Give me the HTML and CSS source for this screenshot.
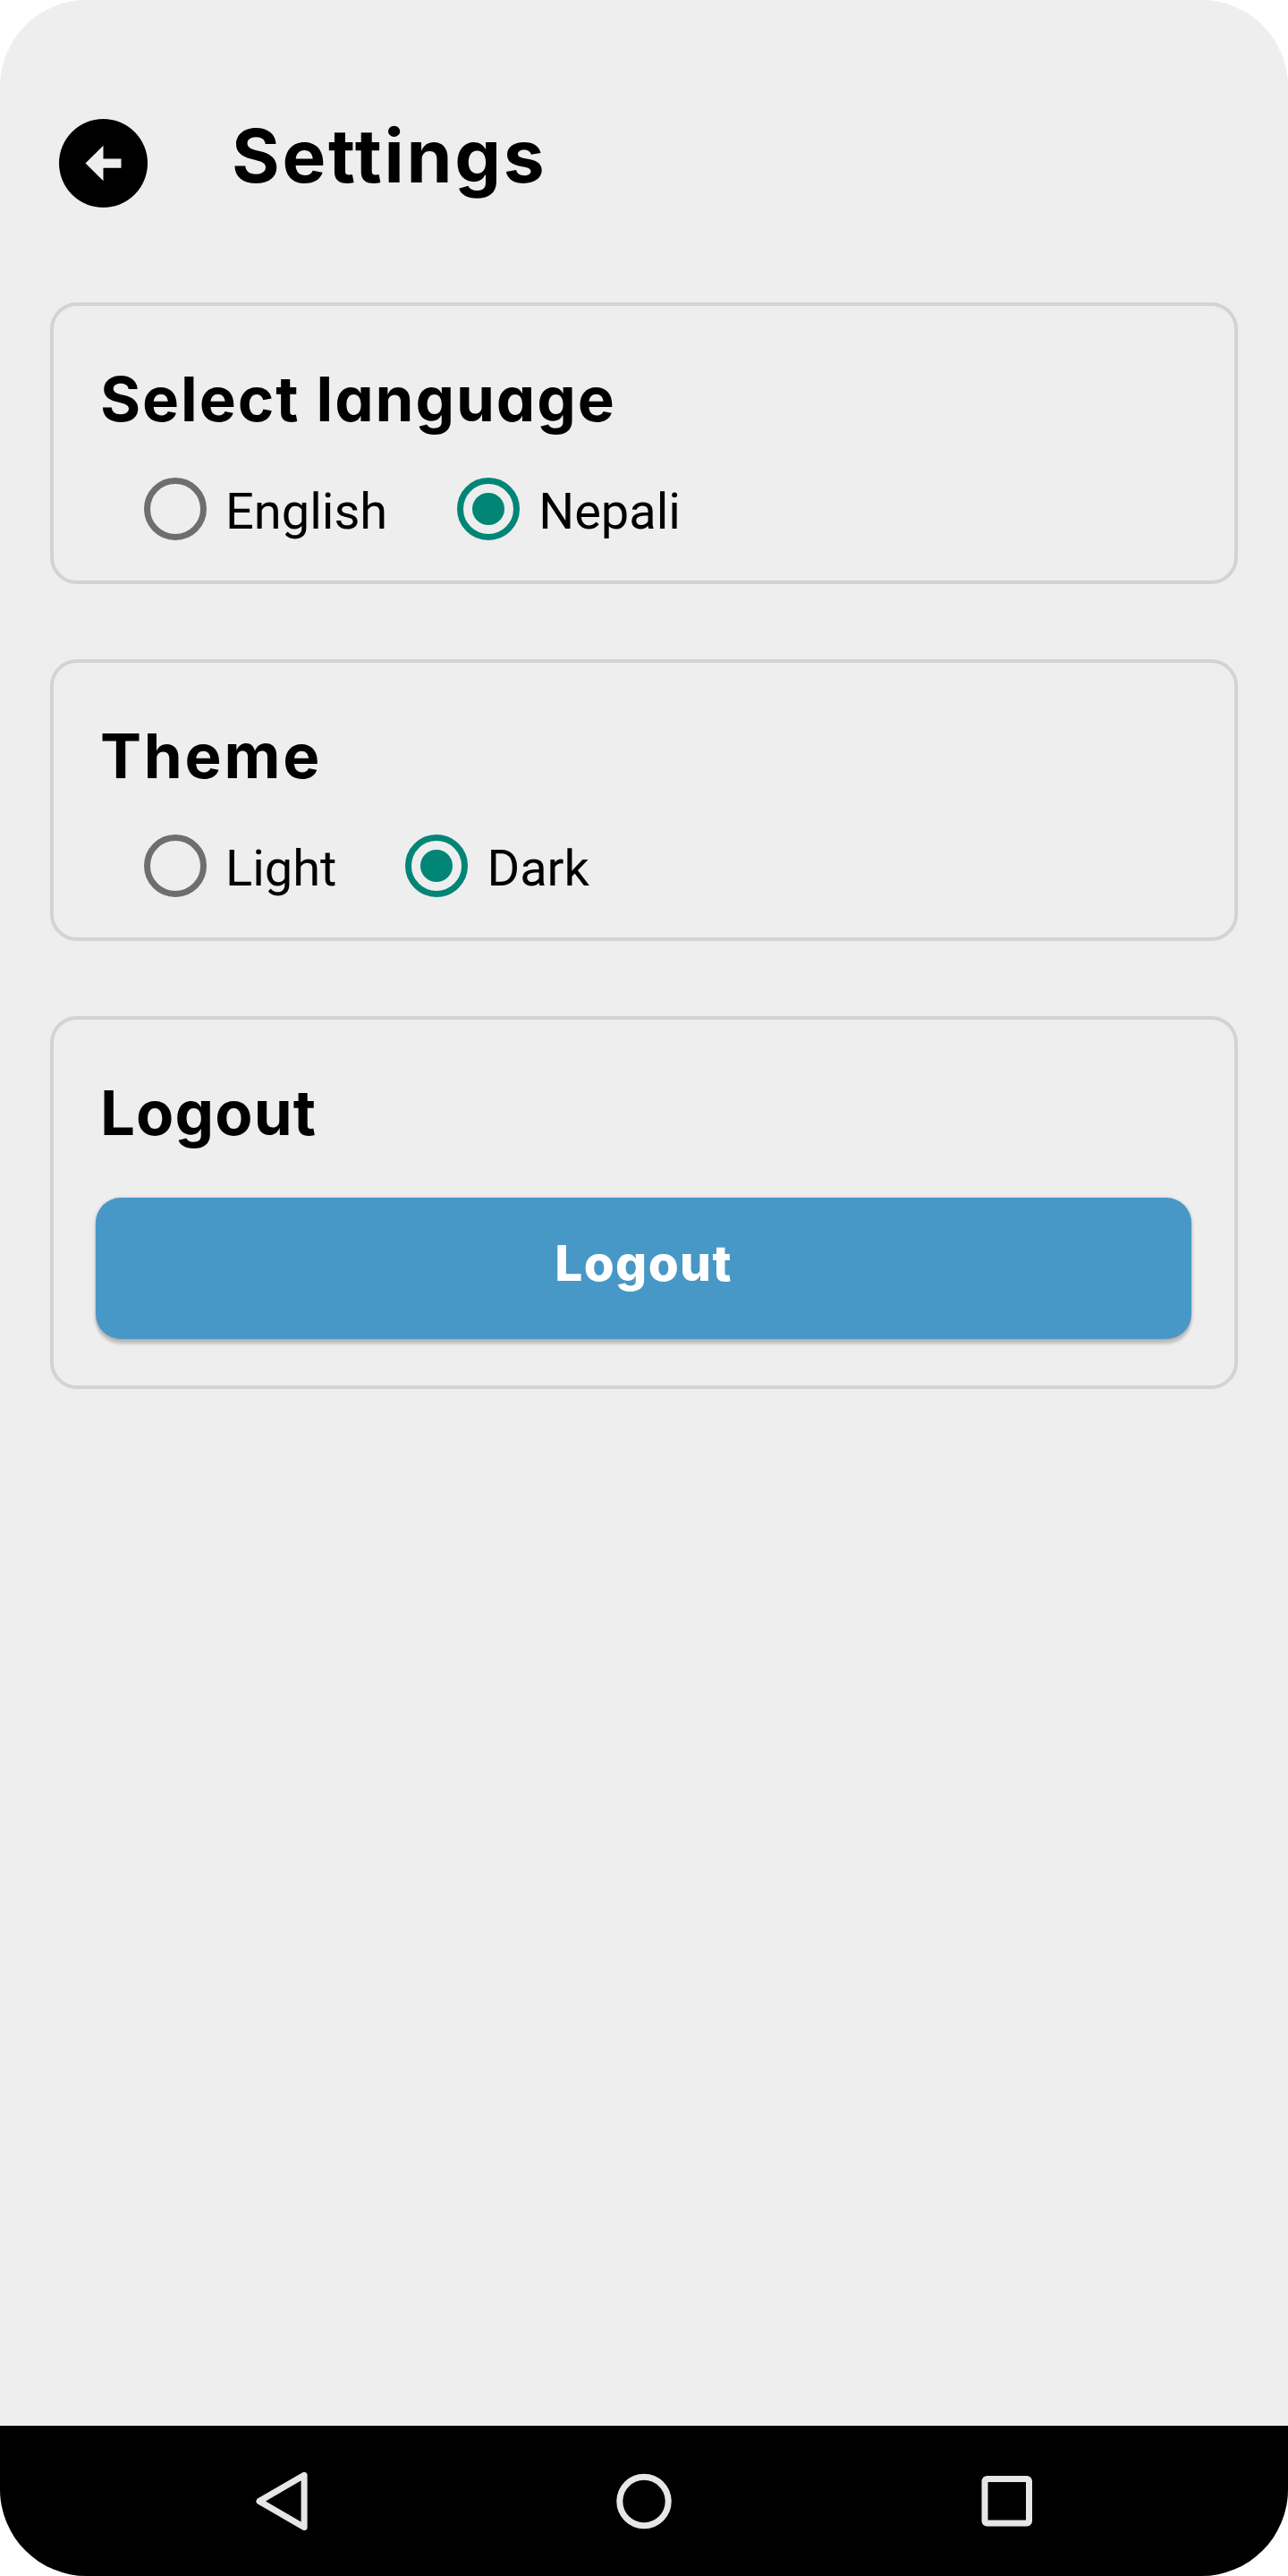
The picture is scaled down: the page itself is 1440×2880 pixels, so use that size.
FILE: index.html
```html
<!DOCTYPE html>
<html lang="en">
<head>
<meta charset="utf-8">
<title>Settings</title>
<link rel="stylesheet" href="styles.css">
</head>
<body>
<div class="screen">
  <header class="header">
    <svg class="back" viewBox="0 0 99 99" role="img" aria-label="Back">
      <circle cx="49.5" cy="49.5" r="49.5" fill="#000"/>
      <path d="M29.5 49.5 49.5 29.8V44.5H69.5V54.7H49.5V69.2Z" fill="#eee"/>
    </svg>
    <h1 class="title">Settings</h1>
  </header>
  <main class="cards">
    <section class="card">
      <h2 class="heading heading-language">Select language</h2>
      <div class="options">
        <label class="option"><span class="radio"></span><span class="label">English</span></label>
        <label class="option"><span class="radio radio-on"></span><span class="label">Nepali</span></label>
      </div>
    </section>
    <section class="card">
      <h2 class="heading heading-theme">Theme</h2>
      <div class="options options-theme">
        <label class="option"><span class="radio"></span><span class="label">Light</span></label>
        <label class="option"><span class="radio radio-on"></span><span class="label">Dark</span></label>
      </div>
    </section>
    <section class="card card-logout">
      <h2 class="heading heading-logout">Logout</h2>
      <button class="button" type="button">Logout</button>
    </section>
  </main>
  <nav class="navbar">
    <svg class="nav-icon" viewBox="0 0 80 80"><path d="M16 40.4 66.1 11.3V69.5Z"/></svg>
    <svg class="nav-icon" viewBox="0 0 80 80"><circle cx="40" cy="40.5" r="27.2"/></svg>
    <svg class="nav-icon" viewBox="0 0 80 80"><rect x="15" y="15.5" width="49.5" height="49.5" rx="2.5"/></svg>
  </nav>
</div>
</body>
</html>
```
FILE: styles.css
```css
* {
  box-sizing: border-box;
}

body {
  margin: 0;
  background: #fff;
  color: #000;
}

.screen {
  display: flex;
  flex-direction: column;
  width: 1440px;
  height: 2880px;
  overflow: hidden;
  border-radius: 97px;
  background: #eee;
}

.header {
  display: flex;
  align-items: flex-start;
  gap: 94px;
  padding: 133px 66px 0;
}

.back {
  width: 99px;
  height: 99px;
}

.title,
.heading,
.button {
  margin: 0;
  font-family: Inter, "Open Sans", sans-serif;
  font-feature-settings: "cv11";
  white-space: nowrap;
}

.title {
  font-size: 82px;
  font-weight: 650;
  line-height: 83px;
  letter-spacing: 2.7px;
}

.cards {
  display: flex;
  flex: 1;
  flex-direction: column;
  gap: 84px;
  padding: 106px 56px 0;
}

.card {
  height: 315px;
  padding: 64px 48px 0 47px;
  border: 4px solid #d3d3d3;
  border-radius: 30px;
}

.card-logout {
  height: 417px;
}

.heading {
  padding-left: 5px;
  font-size: 69px;
  font-weight: 650;
  line-height: 80px;
}

.heading-language {
  letter-spacing: 1.9px;
}

.heading-theme {
  letter-spacing: 2.8px;
}

.heading-logout {
  letter-spacing: 1.1px;
}

.options {
  display: flex;
  gap: 78px;
  height: 70px;
  margin: 48px 0 0 54px;
}

.options-theme {
  gap: 77px;
}

.option {
  display: flex;
  gap: 21px;
}

.radio {
  display: flex;
  align-items: center;
  justify-content: center;
  width: 70px;
  height: 70px;
  border: 7px solid #6e6e6e;
  border-radius: 50%;
}

.radio-on {
  border-color: #008577;
}

.radio-on::after {
  width: 36px;
  height: 36px;
  border-radius: 50%;
  background: #008577;
  content: "";
}

.label {
  font-family: Roboto, sans-serif;
  font-size: 56px;
  line-height: 76px;
}

.button {
  display: block;
  width: 100%;
  height: 158px;
  margin-top: 55px;
  padding: 0 0 12px;
  border: 0;
  border-radius: 28px;
  background: #4798c6;
  box-shadow: 0 6px 3px rgba(0, 0, 0, .15), 0 1px 4px rgba(0, 0, 0, .22);
  color: #fff;
  font-size: 55px;
  font-weight: 800;
  line-height: 146px;
  letter-spacing: 1.4px;
}

.navbar {
  display: flex;
  justify-content: space-between;
  height: 168px;
  padding: 44px 274px 0;
  background: #000;
}

.nav-icon {
  width: 80px;
  height: 80px;
  fill: none;
  stroke: #e6e6e6;
  stroke-width: 7;
  stroke-linejoin: round;
}
```
